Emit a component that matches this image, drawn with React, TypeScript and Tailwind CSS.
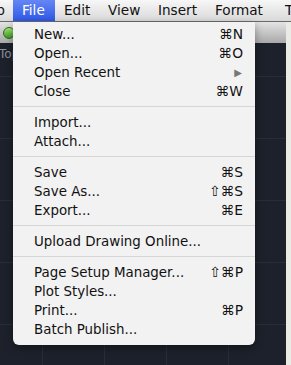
import React from "react";

type Item = { label: string; sc?: string; arrow?: boolean } | "sep";

const items: Item[] = [
  { label: "New...", sc: "⌘N" },
  { label: "Open...", sc: "⌘O" },
  { label: "Open Recent", arrow: true },
  { label: "Close", sc: "⌘W" },
  "sep",
  { label: "Import..." },
  { label: "Attach..." },
  "sep",
  { label: "Save", sc: "⌘S" },
  { label: "Save As...", sc: "⇧⌘S" },
  { label: "Export...", sc: "⌘E" },
  "sep",
  { label: "Upload Drawing Online..." },
  "sep",
  { label: "Page Setup Manager...", sc: "⇧⌘P" },
  { label: "Plot Styles..." },
  { label: "Print...", sc: "⌘P" },
  { label: "Batch Publish..." },
];

export default function App() {
  return (
    <div
      className="relative w-[291px] h-[365px] overflow-hidden bg-[#1c212b]"
      style={{ fontFamily: '"DejaVu Sans", "Liberation Sans", sans-serif' }}
    >
      {/* menu bar */}
      <div className="flex h-[22px] items-center overflow-hidden whitespace-nowrap bg-gradient-to-b from-[#f7f7f7] to-[#d9d9d9] border-b border-[#6a6a6a] text-[13.6px] text-[#111]">
        <div className="w-[13px] shrink-0 overflow-hidden flex justify-end"><span className="mr-[8px]">p</span></div>
        <div className="shrink-0 h-full flex items-center pl-[9px] w-[42px] bg-gradient-to-b from-[#6586f5] to-[#2f56e6] text-white">File</div>
        <div className="shrink-0 pl-[9px] w-[44px]">Edit</div>
        <div className="shrink-0 pl-[9px] w-[50px]">View</div>
        <div className="shrink-0 pl-[9px] w-[57px]">Insert</div>
        <div className="shrink-0 pl-[9px] w-[70px]">Format</div>
        <div className="shrink-0 pl-[9px]">T</div>
      </div>

      {/* window area */}
      <div className="flex h-[343px]">
        <div className="flex-1 flex flex-col">
          <div className="h-[21px] bg-gradient-to-b from-[#e4e4e4] to-[#a9a9a9] relative">
            <div className="absolute left-[3px] top-[5px] w-[12px] h-[12px] rounded-full bg-gradient-to-b from-[#a6e37a] to-[#3a9a1c] border border-[#2e6b16]" />
          </div>
          <div
            className="flex-1 relative"
            style={{
              backgroundImage:
                "linear-gradient(to right, #272e3b 1px, transparent 1px), linear-gradient(to bottom, #272e3b 1px, transparent 1px)",
              backgroundSize: "62px 62px",
              backgroundPosition: "42px 33px",
            }}
          >
            <div className="absolute -left-[1px] top-[5px] text-[12px] text-[#8a8f99] leading-none">Top</div>
          </div>
        </div>
        <div className="w-[5px] bg-[#ebebe6]" />
      </div>

      {/* File menu dropdown */}
      <div className="absolute left-[13px] top-[22px] w-[242px] pt-[3px] pb-[6px] bg-[#f2f2f2] rounded-b-[6px] shadow-[0_3px_8px_rgba(0,0,0,0.35)] text-[13.4px] text-[#111]">
        {items.map((it, i) =>
          it === "sep" ? (
            <div key={i} className="pt-[5px] pb-[6px]">
              <div className="h-px bg-[#d6d6d6]" />
            </div>
          ) : (
            <div key={i} className="h-[19px] flex items-center justify-between pl-[21px] pr-[12px] leading-none">
              <span>{it.label}</span>
              {it.sc && <span className="text-[13.8px]">{it.sc}</span>}
              {it.arrow && <span className="text-[#777] text-[10px] pr-[1px]">▶</span>}
            </div>
          )
        )}
      </div>
    </div>
  );
}
